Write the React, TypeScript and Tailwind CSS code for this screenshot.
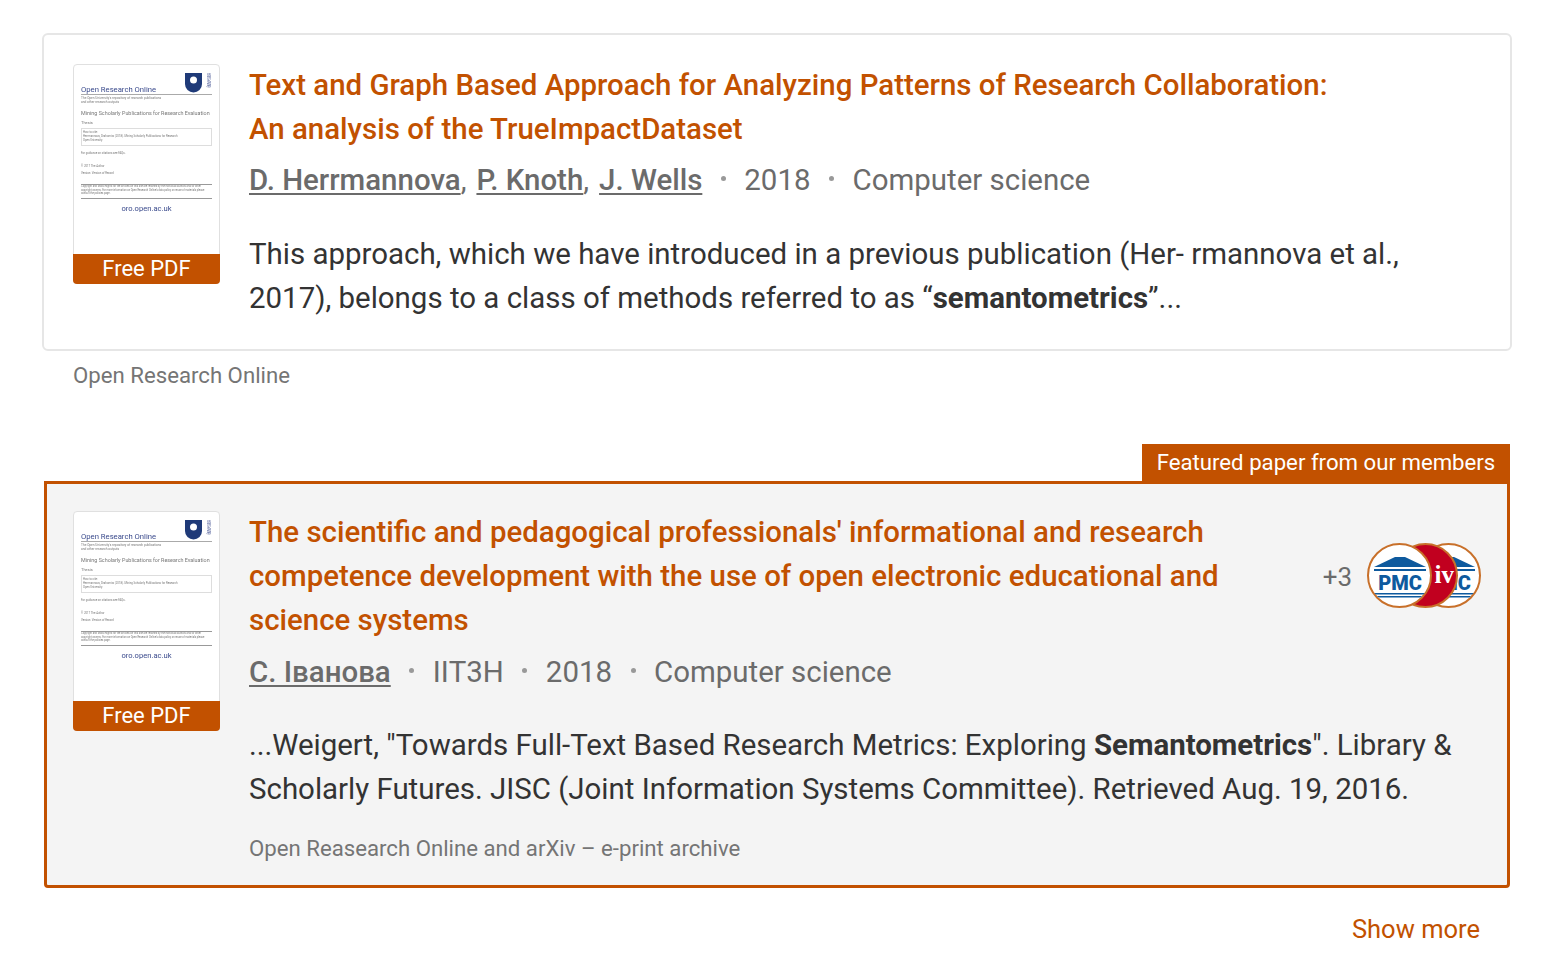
import React from 'react';

function Thumbnail() {
  return (
    <div className="w-[147px] h-[220px] shrink-0 rounded-[4px] border border-[#e0e0e0] bg-white relative flex flex-col">
      <div className="flex-1 px-[7px] pt-[6px] text-[#777] leading-none overflow-hidden blur-[0.35px]">
        <div className="flex items-end justify-between border-b border-[#aaa] pb-[1px] h-[24px]">
          <span className="text-[7.7px] text-[#3a4a8c] whitespace-nowrap relative top-[1px]">Open Research Online</span>
          <div className="flex gap-[2px] items-start mr-[1px] -mt-[3px]">
            <svg width="17" height="20" viewBox="0 0 17 20">
              <path d="M0 0H17V11A8.5 8.5 0 0 1 0 11Z" fill="#1f3a78" />
              <circle cx="8.5" cy="7" r="3.5" fill="#fff" />
            </svg>
            <div className="w-[7px] h-[20px] overflow-hidden text-[3.4px] leading-[2.4px] text-[#3a4a8c] [writing-mode:vertical-rl]">The Open University</div>
          </div>
        </div>
        <div className="text-[3.2px] leading-[4px] mt-[1px] whitespace-nowrap">The Open University's repository of research publications</div>
        <div className="text-[3.2px] leading-[4px] whitespace-nowrap">and other research outputs</div>
        <div className="text-[5.4px] leading-[6px] mt-[6px] whitespace-nowrap">Mining Scholarly Publications for Research Evaluation</div>
        <div className="text-[4px] leading-[5px] mt-[4px]">Thesis</div>
        <div className="border border-[#ddd] mt-[3px] px-[1px] py-[1px] h-[18px] text-[2.8px] leading-[4px]">
          <div>How to cite:</div>
          <div className="whitespace-nowrap">Herrmannova, Drahomira (2018). Mining Scholarly Publications for Research</div>
          <div>Open University.</div>
        </div>
        <div className="text-[2.8px] leading-[4px] mt-[5px]">For guidance on citations see FAQs.</div>
        <div className="text-[2.8px] leading-[4px] mt-[9px]">© 2017 The Author</div>
        <div className="text-[2.8px] leading-[4px] mt-[3px]">Version: Version of Record</div>
        <div className="border-y border-[#999] mt-[9px] h-[15px] text-[2.6px] leading-[3.5px] overflow-hidden">
          Copyright and Moral Rights for the articles on this site are retained by the individual authors and/or other copyright owners. For more information on Open Research Online's data policy on reuse of materials please consult the policies page.
        </div>
        <div className="text-[7.6px] text-[#3a4a8c] text-center mt-[6px]">oro.open.ac.uk</div>
      </div>
      <div className="h-[30px] -mx-[1px] -mb-[1px] pb-[2px] rounded-b-[4px] bg-[#c25100] text-white text-[22px] flex items-center justify-center">Free PDF</div>
    </div>
  );
}

function PmcLogo({ className }: { className: string }) {
  return (
    <div className={`w-[65px] h-[65px] rounded-full border-2 border-[#c8702a] bg-white overflow-hidden shrink-0 ${className}`}>
      <svg width="61" height="61" viewBox="0 0 61 61">
        <path d="M5 22 L26 12 H36 L57 22 Z" fill="#0e5a9e" />
        <rect x="5" y="24" width="52" height="2" fill="#0e5a9e" />
        <text x="31" y="45" textAnchor="middle" fontSize="20" fontWeight="900" fontFamily="Roboto, sans-serif" fill="#0e5a9e">PMC</text>
        <rect x="5" y="48" width="52" height="1.5" fill="#0e5a9e" />
        <rect x="5" y="51" width="52" height="1.5" fill="#0e5a9e" />
      </svg>
    </div>
  );
}

function ArxivLogo() {
  return (
    <div className="relative z-10 w-[65px] h-[65px] -ml-[39px] rounded-full border-2 border-[#c8702a] bg-[#c1001f] overflow-hidden shrink-0">
      <span className="absolute right-[2px] top-[16px] text-[25px] leading-[28px] font-bold text-white font-['Liberation_Serif',serif]">iv</span>
    </div>
  );
}

function Sep() {
  return <span className="inline-block w-[5px] h-[5px] mx-[18.5px] rounded-full bg-[#999] align-[9.5px]" />;
}

function Author({ children }: { children: React.ReactNode }) {
  return <span className="font-medium underline decoration-[1.5px] underline-offset-[3px]">{children}</span>;
}

export default function App() {
  return (
    <div className="min-h-[967px] bg-white px-[42px] pt-[33px] font-['Roboto',sans-serif] text-[#2b2b2b]">
      {/* First result */}
      <div className="w-[1470px] h-[318px] rounded-[6px] border-2 border-[#e6e6e6] bg-white pl-[29px] pr-[30px] pt-[29px] flex gap-[29px]">
        <Thumbnail />
        <div className="flex-1 min-w-0 -mt-[1px]">
          <h3 className="text-[29.44px] leading-[44px] font-medium text-[#c25100]">
            Text and Graph Based Approach for Analyzing Patterns of Research Collaboration:
            <br />
            An analysis of the TrueImpactDataset
          </h3>
          <div className="mt-[9px] text-[29.44px] leading-[40px] text-[#6b6b6b] whitespace-nowrap">
            <Author>D. Herrmannova</Author>,<span className="ml-[10px]"><Author>P. Knoth</Author></span>,<span className="ml-[10px]"><Author>J. Wells</Author></span>
            <Sep />2018<Sep />Computer science
          </div>
          <p className="mt-[32px] text-[29.44px] leading-[44px] text-[#333]">
            This approach, which we have introduced in a previous publication (Her- rmannova et al.,
            <br />
            2017), belongs to a class of methods referred to as “<b className="font-bold">semantometrics</b>”...
          </p>
        </div>
      </div>
      <div className="pl-[31px] mt-[8px] text-[22.2px] leading-[32px] text-[#757575]">Open Research Online</div>

      {/* Featured result */}
      <div className="mt-[53px] w-[1466px] ml-[2px] flex flex-col items-end">
        <div className="h-[37px] w-[368px] pt-[1px] bg-[#c25100] text-white text-[22.2px] flex items-center justify-center">Featured paper from our members</div>
        <div className="w-full h-[407px] border-[3px] border-[#c25100] rounded-b-[4px] bg-[#f4f4f4] pl-[26px] pr-[26px] pt-[27px] flex gap-[29px]">
          <Thumbnail />
          <div className="flex-1 min-w-0 -mt-[1px]">
            <div className="flex justify-between">
              <h3 className="w-[1000px] text-[29.44px] leading-[44px] font-medium text-[#c25100]">
                The scientific and pedagogical professionals' informational and research competence development with the use of open electronic educational and science systems
              </h3>
              <div className="flex items-center h-[65px] mt-[33px]">
                <span className="text-[26px] text-[#6b6b6b] mr-[15px] relative top-[2px]">+3</span>
                <PmcLogo className="relative z-20" />
                <ArxivLogo />
                <PmcLogo className="-ml-[42px]" />
              </div>
            </div>
            <div className="mt-[10px] text-[29.44px] leading-[40px] text-[#6b6b6b] whitespace-nowrap">
              <Author>С. Іванова</Author>
              <Sep />IIТ3Н<Sep />2018<Sep />Computer science
            </div>
            <p className="mt-[31px] text-[29.44px] leading-[44px] text-[#333]">
              ...Weigert, "Towards Full-Text Based Research Metrics: Exploring <b className="font-bold">Semantometrics</b>". Library &
              <br />
              Scholarly Futures. JISC (Joint Information Systems Committee). Retrieved Aug. 19, 2016.
            </p>
            <div className="mt-[21px] text-[22.2px] leading-[32px] text-[#757575]">Open Reasearch Online and arXiv – e-print archive</div>
          </div>
        </div>
      </div>

      <div className="w-[1438px] mt-[23px] text-right text-[25.5px] leading-[36px] text-[#c25100]">Show more</div>
    </div>
  );
}
